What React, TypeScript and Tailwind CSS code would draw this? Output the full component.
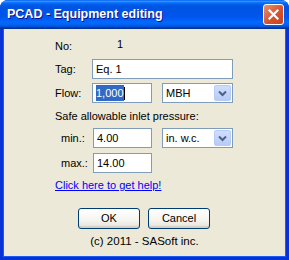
import React from "react";

const font = "font-['Tahoma','Liberation_Sans',sans-serif]";

function Field({ w, children }: { w: string; children?: React.ReactNode }) {
  return (
    <div className={`${w} h-[20px] border border-[#7f9db9] bg-white flex items-center pl-[3px] text-[11px] text-black`}>
      {children}
    </div>
  );
}

function Select({ value }: { value: string }) {
  return (
    <div className="w-[71px] h-[20px] border border-[#7f9db9] bg-white flex items-center justify-between pl-[3px] pr-[1px] text-[11px] text-black">
      <span>{value}</span>
      <div className="w-[17px] h-[16px] rounded-[2px] border border-[#b7cbf8] bg-[linear-gradient(to_bottom,#d0defd,#b8cbf6)] flex items-center justify-center">
        <svg width="9" height="7" viewBox="0 0 9 7">
          <path d="M1 1.5 L4.5 5 L8 1.5" fill="none" stroke="#4d6185" strokeWidth="2" />
        </svg>
      </div>
    </div>
  );
}

function XpButton({ label }: { label: string }) {
  return (
    <div className="w-[62px] h-[21px] rounded-[3px] border border-[#003c74] bg-[linear-gradient(to_bottom,#ffffff,#f5f4ef_60%,#e3e1d6)] flex items-center justify-center text-[11px] text-black shadow-[inset_0_-2px_0_#d6d0c5]">
      {label}
    </div>
  );
}

export default function App() {
  return (
    <div className={`w-[289px] h-[260px] bg-white ${font}`}>
      <div className="w-[289px] h-[260px] rounded-t-[8px] bg-[#0831d9] flex flex-col overflow-hidden">
        {/* Title bar */}
        <div className="h-[29px] shrink-0 bg-[linear-gradient(to_bottom,#0058ee_0%,#3593ff_4%,#288eff_6%,#127dff_8%,#036ffc_10%,#0262ee_14%,#0057e5_20%,#0054e3_24%,#0055eb_56%,#005bf5_66%,#026afe_76%,#0062ef_86%,#0052d6_92%,#0040ab_94%,#003092_100%)] flex items-center justify-between pl-[7px] pr-[5px]">
          <span className="text-white font-bold text-[12.5px] font-['Trebuchet_MS','Liberation_Sans',sans-serif] [text-shadow:1px_1px_#0f1089]">
            PCAD - Equipment editing
          </span>
          <div className="w-[21px] h-[21px] rounded-[3px] border border-white bg-[linear-gradient(135deg,#e9926f,#d7532e_55%,#c2411c)] flex items-center justify-center">
            <svg width="11" height="11" viewBox="0 0 11 11">
              <path d="M1.5 1.5 L9.5 9.5 M9.5 1.5 L1.5 9.5" stroke="white" strokeWidth="2.2" strokeLinecap="square" />
            </svg>
          </div>
        </div>
        {/* Body */}
        <div className="flex-1 mx-[3px] mb-[3px] bg-[#ece9d8] border-l border-r border-b border-[#1a5cf0] flex flex-col text-[11px] text-black pl-[51px]">
          <div className="mt-[5px] h-[20px] flex items-center">
            <span className="w-[62px] mt-[4px]">No:</span>
            <span>1</span>
          </div>
          <div className="mt-[5px] h-[20px] flex items-center">
            <span className="w-[37px]">Tag:</span>
            <Field w="w-[141px]">Eq. 1</Field>
          </div>
          <div className="mt-[4px] h-[20px] flex items-center">
            <span className="w-[37px]">Flow:</span>
            <Field w="w-[60px]">
              <span className="bg-[#316ac5] text-white">1,000</span>
              <span className="w-[1px] h-[13px] bg-black"></span>
            </Field>
            <div className="ml-[10px]">
              <Select value="MBH" />
            </div>
          </div>
          <div className="mt-[6px] h-[14px] flex items-center">Safe allowable inlet pressure:</div>
          <div className="mt-[5px] h-[20px] flex items-center pl-[6px]">
            <span className="w-[32px]">min.:</span>
            <Field w="w-[59px]">4.00</Field>
            <div className="ml-[10px]">
              <Select value="in. w.c." />
            </div>
          </div>
          <div className="mt-[5px] h-[20px] flex items-center pl-[6px]">
            <span className="w-[32px]">max.:</span>
            <Field w="w-[59px]">14.00</Field>
          </div>
          <div className="mt-[5px] h-[14px] flex items-center">
            <span className="text-[#0000ff] underline">Click here to get help!</span>
          </div>
          <div className="mt-[16px] flex gap-[8px] ml-[23px]">
            <XpButton label="OK" />
            <XpButton label="Cancel" />
          </div>
          <div className="mt-[6px] h-[14px] flex items-center justify-center ml-[-51px] text-[11.5px]">(c) 2011 - SASoft inc.</div>
        </div>
      </div>
    </div>
  );
}
